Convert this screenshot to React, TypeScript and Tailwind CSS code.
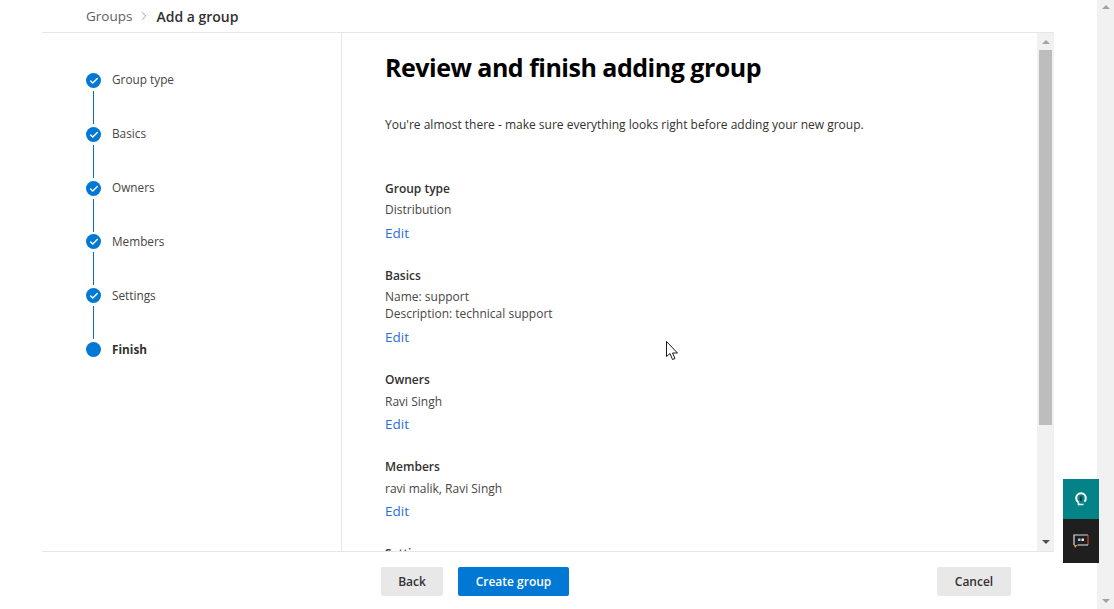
import { Check, ChevronRight } from 'lucide-react'

const steps = ['Group type', 'Basics', 'Owners', 'Members', 'Settings', 'Finish']

const sections = [
  { title: 'Group type', lines: ['Distribution'], low: false },
  { title: 'Basics', lines: ['Name: support', 'Description: technical support'], low: false },
  { title: 'Owners', lines: ['Ravi Singh'], low: true },
  { title: 'Members', lines: ['ravi malik, Ravi Singh'], low: true },
]

function Stepper() {
  return (
    <div className="w-[300px] shrink-0 border-r border-[#e6e6e6] pl-[44px] pt-[39px]">
      {steps.map((step, i) => {
        const last = i === steps.length - 1
        return (
          <div key={step} className="flex h-[54px] gap-[11px]">
            <div className="flex w-[15px] flex-col items-center">
              <div className={`flex h-[15px] w-[15px] shrink-0 items-center justify-center rounded-full bg-[#0078d4] ${i < 3 ? 'mt-[1px]' : 'mt-0'}`}>
                {!last && <Check size={10} strokeWidth={3.5} className="text-white" />}
              </div>
              {!last && <div className="mt-[3px] h-[33px] w-[1px] bg-[#0f6cbd]" />}
            </div>
            <span className={`-mt-[1px] text-[11.8px] leading-[17px] ${last ? 'font-bold text-[#323130]' : 'text-[#484644]'}`}>
              {step}
            </span>
          </div>
        )
      })}
    </div>
  )
}

function Scrollbar() {
  return (
    <div className="flex w-[17px] shrink-0 flex-col items-center bg-[#f1f1f1]">
      <div className="mt-[7px] h-0 w-0 border-x-[4px] border-b-[4px] border-x-transparent border-b-[#a3a3a3]" />
      <div className="mt-[6px] h-[375px] w-[13px] bg-[#bdbdbd]" />
      <div className="mt-auto mb-[7px] h-0 w-0 border-x-[4px] border-t-[4px] border-x-transparent border-t-[#505050]" />
    </div>
  )
}

export default function App() {
  return (
    <div className="relative flex h-[609px] w-[1114px] overflow-hidden bg-white font-['Open_Sans',sans-serif]">
      <div className="flex w-[1097px] flex-col pl-[42px] pr-[43px]">
        {/* Breadcrumb */}
        <div className="flex h-[33px] shrink-0 items-center border-b border-[#e6e6e6] pl-[44px]">
          <span className="text-[13.5px] text-[#605e5c]">Groups</span>
          <ChevronRight size={14} strokeWidth={1} className="mx-[5px] text-[#605e5c]" />
          <span className="text-[14px] font-semibold text-[#323130]">Add a group</span>
        </div>

        {/* Middle */}
        <div className="flex h-[518px] shrink-0 overflow-hidden">
          <Stepper />
          <div className="flex-1 overflow-hidden pl-[43px]">
            <h1 className="mt-[15px] text-[25px] leading-[38px] font-bold text-black tracking-[-0.5px]">
              Review and finish adding group
            </h1>
            <p className="mt-[30px] text-[12px] leading-[17px] text-[#323130]">
              You're almost there - make sure everything looks right before adding your new group.
            </p>
            <div className="mt-[47px]">
              {sections.map((s) => (
                <div key={s.title} className="mb-[25px]">
                  <div className="text-[12px] leading-[17px] font-semibold text-[#323130]">{s.title}</div>
                  <div className={`text-[12px] leading-[17px] text-[#484644] ${s.low ? 'mt-[5px]' : 'mt-[4px]'}`}>
                    {s.lines.map((l) => (
                      <div key={l}>{l}</div>
                    ))}
                  </div>
                  <div className={`text-[13.5px] leading-[17px] text-[#2b6fd6] ${s.low ? 'mt-[6px]' : 'mt-[7px]'}`}>Edit</div>
                </div>
              ))}
              <div className="text-[12px] leading-[17px] font-semibold text-[#323130]">Settings</div>
            </div>
          </div>
          <Scrollbar />
        </div>

        {/* Footer */}
        <div className="flex flex-1 items-start border-t border-[#e6e6e6] pt-[15px]">
          <div className="ml-[339px] flex gap-[15px]">
            <button className="h-[29px] w-[62px] rounded-[2px] bg-[#e8e8e8] text-[12px] font-semibold text-[#323130]">
              Back
            </button>
            <button className="h-[29px] w-[111px] rounded-[2px] bg-[#0078d4] text-[12px] font-semibold text-white">
              Create group
            </button>
          </div>
          <button className="ml-auto mr-[43px] h-[29px] w-[74px] rounded-[2px] bg-[#e8e8e8] text-[12px] font-semibold text-[#323130]">
            Cancel
          </button>
        </div>
      </div>

      {/* Page scrollbar, nothing to scroll */}
      <div className="flex w-[17px] shrink-0 flex-col items-center justify-between bg-[#f1f1f1] pt-[5px] pb-[6px]">
        <div className="h-0 w-0 border-x-[4px] border-b-[4px] border-x-transparent border-b-[#a3a3a3]" />
        <div className="h-0 w-0 border-x-[4px] border-t-[4px] border-x-transparent border-t-[#a3a3a3]" />
      </div>

      {/* Floating help widgets */}
      <div className="absolute top-[479px] left-[1063px] w-[36px]">
        <div className="flex h-[40px] items-center justify-center bg-[#038387]">
          <svg width="12" height="14" viewBox="0 0 12 14" fill="none">
            <path d="M3.500 10.500C2 9.600 1.200 8.200 1.200 6.200 1.200 3.200 3.200 1.200 6 1.200s4.800 2 4.800 5c0 1.300-.5 2.500-1.500 3.300" stroke="white" strokeWidth="2" />
            <path d="M6 4.500v4.500" stroke="#12343a" strokeWidth="2" />
            <path d="M3.500 10.500v2h5" stroke="white" strokeWidth="1.600" />
          </svg>
        </div>
        <div className="flex h-[44px] items-center justify-center bg-[#1f1f1f]">
          <svg width="16" height="15" viewBox="0 0 16 15" fill="none">
            <path d="M1 11V1h14" stroke="#dcdcdc" strokeWidth="1.200" />
            <path d="M15 1v10" stroke="#d8403a" strokeWidth="1.200" />
            <path d="M15 11H4.500" stroke="#c8c8c8" strokeWidth="1.200" />
            <path d="M1 11h3.500L2 14z" fill="#e0a040" />
            <rect x="5" y="4.500" width="2.500" height="2.500" fill="#9cc8e8" />
            <rect x="8.500" y="4.500" width="2.500" height="2.500" fill="#e8e8e8" />
          </svg>
        </div>
      </div>

      {/* Mouse pointer */}
      <svg className="absolute top-[340px] left-[665px]" width="15" height="21" viewBox="0 0 15 21" fill="white" stroke="#1a1a1a" strokeWidth="1">
        <path d="M1.500 1.500v15l3.500-3 2.500 6 2.500-1-2.500-5.500h5z" />
      </svg>
    </div>
  )
}
